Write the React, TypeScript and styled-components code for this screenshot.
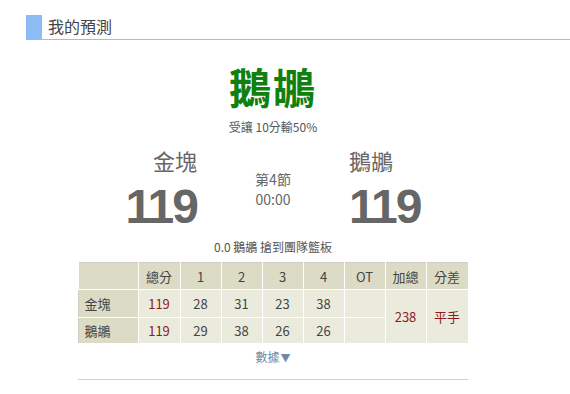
import React from 'react';
import styled, { createGlobalStyle } from 'styled-components';

const GlobalStyle = createGlobalStyle`
  html, body {
    margin: 0;
    padding: 0;
    background: #fff;
  }
  body {
    font-family: "Noto Sans CJK TC", "Liberation Sans", sans-serif;
    color: #555;
  }
`;

type TeamRow = {
  name: string;
  total: number;
  quarters: number[];
};

const rows: TeamRow[] = [
  { name: '金塊', total: 119, quarters: [28, 31, 23, 38] },
  { name: '鵝鶘', total: 119, quarters: [29, 38, 26, 26] },
];

// column labels and widths, first one is the team name column
const columns = [
  { label: '', width: 60 },
  { label: '總分', width: 42 },
  { label: '1', width: 41 },
  { label: '2', width: 41 },
  { label: '3', width: 41 },
  { label: '4', width: 41 },
  { label: 'OT', width: 41 },
  { label: '加總', width: 41 },
  { label: '分差', width: 42 },
];

const Page = styled.div`
  width: 570px;
  height: 394px;
  padding-top: 15px;
  box-sizing: border-box;
  overflow: hidden;
`;

const Header = styled.div`
  display: flex;
  margin-left: 26px;
  height: 25px;
`;

const HeaderMark = styled.div`
  width: 16px;
  background: #8cbcf4;
`;

const HeaderTitle = styled.h2`
  flex: 1;
  margin: 0;
  padding-left: 6px;
  font-size: 16px;
  font-weight: normal;
  line-height: 23px;
  color: #444;
  border-bottom: 1px solid #a9bbd0;
`;

const Content = styled.div`
  width: 390px;
  margin-left: 78px;
  display: flex;
  flex-direction: column;
  align-items: center;
`;

const Pick = styled.div`
  margin-top: 22px;
  font-size: 42px;
  font-weight: bold;
  line-height: 48px;
  color: #11800f;
  letter-spacing: 2px;
`;

const Spread = styled.div`
  margin-top: 9px;
  font-size: 12px;
  line-height: 16px;
  color: #555;
`;

const Scoreboard = styled.div`
  display: flex;
  width: 100%;
  margin-top: 10px;
`;

const Side = styled.div<{ $align: 'left' | 'right' }>`
  flex: 1;
  display: flex;
  flex-direction: column;
  align-items: ${(p) => (p.$align === 'left' ? 'flex-end' : 'flex-start')};
`;

const TeamName = styled.div`
  font-size: 22px;
  line-height: 30px;
  color: #666;
`;

const BigScore = styled.div`
  margin-top: 8px;
  font-family: "Liberation Sans", Arial, sans-serif;
  font-size: 48px;
  font-weight: bold;
  line-height: 48px;
  letter-spacing: -2px;
  color: #666;
`;

const Clock = styled.div`
  width: 152px;
  padding-top: 24px;
  text-align: center;
  font-size: 14px;
  line-height: 20px;
  color: #666;
`;

const PlayByPlay = styled.div`
  margin-top: 7px;
  font-size: 12px;
  line-height: 18px;
  color: #555;
`;

const Table = styled.table`
  width: 390px;
  margin-top: 6px;
  table-layout: fixed;
  border-collapse: collapse;
  border: 1px solid #cfcfc4;
  font-size: 13px;
`;

const Th = styled.th<{ $w: number }>`
  box-sizing: border-box;
  width: ${(p) => p.$w}px;
  height: 27px;
  padding: 0;
  background: #dcdcc6;
  border: 1px solid #fff;
  border-top: none;
  font-weight: normal;
  color: #444;
  text-align: center;
`;

const RowHead = styled.td<{ $h: number }>`
  height: ${(p) => p.$h}px;
  padding: 0;
  text-indent: 6px;
  background: #dcdcc6;
  border: 1px solid #fff;
  border-left: none;
  color: #444;
  text-align: left;
`;

const Td = styled.td<{ $red?: boolean }>`
  padding: 0;
  background: #ebebdd;
  border: 1px solid #fff;
  text-align: center;
  color: ${(p) => (p.$red ? '#8c1c1c' : '#444')};
`;

const More = styled.div`
  margin-top: 4px;
  font-size: 12px;
  line-height: 18px;
  color: #6e88a6;
`;

const Arrow = styled.span`
  margin-left: 1px;
  font-size: 10px;
`;

const Divider = styled.div`
  width: 100%;
  height: 1px;
  margin-top: 12px;
  background: #cfcfcf;
`;

export default function App() {
  return (
    <Page>
      <GlobalStyle />
      <Header>
        <HeaderMark />
        <HeaderTitle>我的預測</HeaderTitle>
      </Header>

      <Content>
        <Pick>鵝鶘</Pick>
        <Spread>受讓 10分輸50%</Spread>

        <Scoreboard>
          <Side $align="left">
            <TeamName>金塊</TeamName>
            <BigScore>119</BigScore>
          </Side>
          <Clock>
            第4節
            <br />
            00:00
          </Clock>
          <Side $align="right">
            <TeamName>鵝鶘</TeamName>
            <BigScore>119</BigScore>
          </Side>
        </Scoreboard>

        <PlayByPlay>0.0 鵝鶘 搶到團隊籃板</PlayByPlay>

        <Table>
          <thead>
            <tr>
              {columns.map((c, i) => (
                <Th key={i} $w={c.width}>
                  {c.label}
                </Th>
              ))}
            </tr>
          </thead>
          <tbody>
            {rows.map((row, i) => (
              <tr key={row.name}>
                <RowHead $h={i === 0 ? 27 : 25}>{row.name}</RowHead>
                <Td $red>{row.total}</Td>
                {row.quarters.map((q, j) => (
                  <Td key={j}>{q}</Td>
                ))}
                <Td />
                {i === 0 ? (
                  <>
                    <Td $red rowSpan={2}>238</Td>
                    <Td $red rowSpan={2}>平手</Td>
                  </>
                ) : null}
              </tr>
            ))}
          </tbody>
        </Table>

        <More>
          數據<Arrow>▼</Arrow>
        </More>
        <Divider />
      </Content>
    </Page>
  );
}
